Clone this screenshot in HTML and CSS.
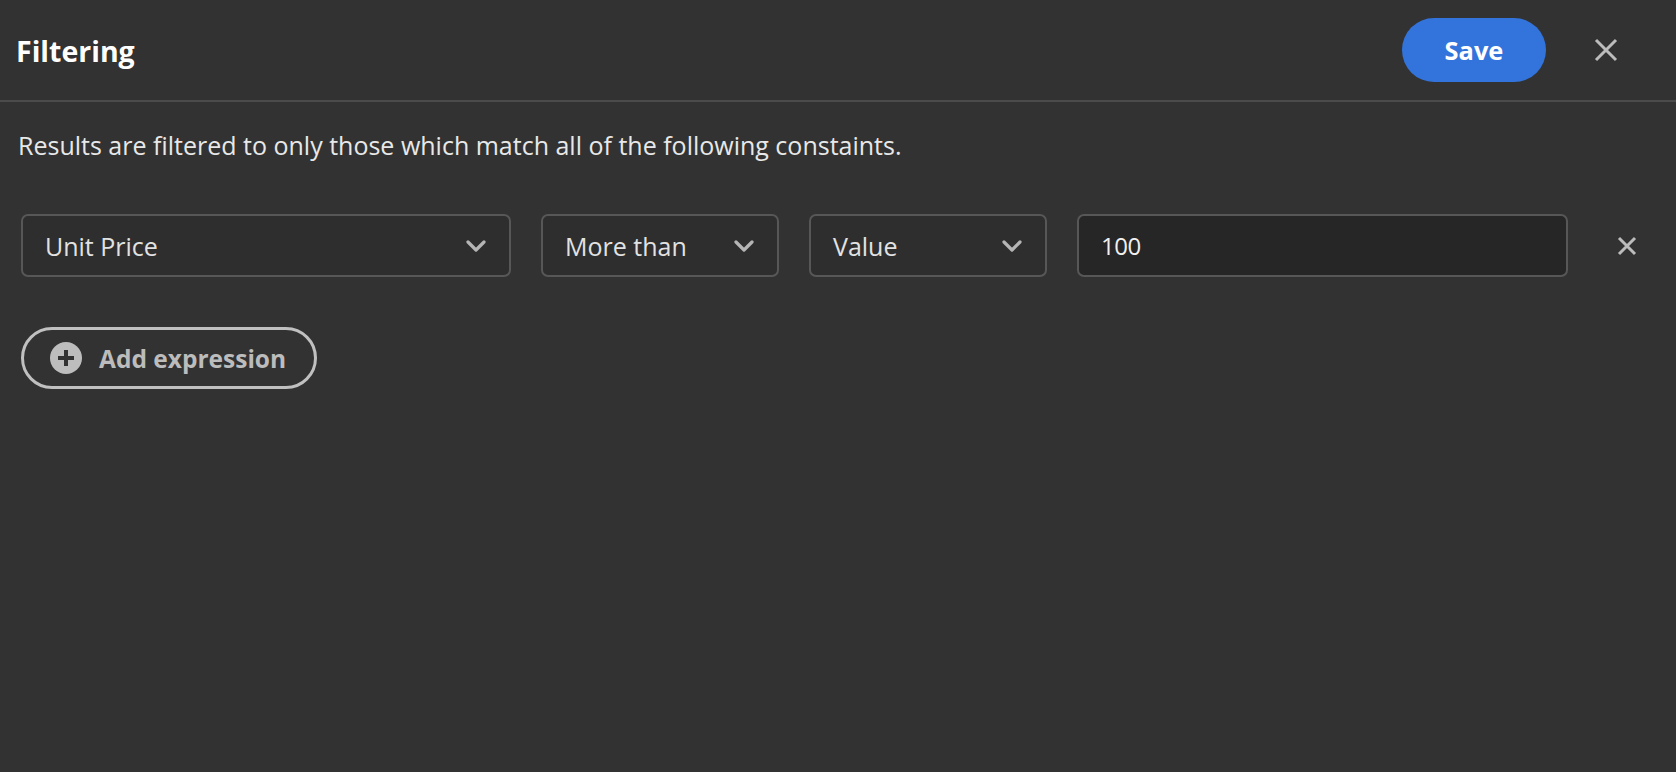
FILE: index.html
```html
<!DOCTYPE html>
<html lang="en">
<head>
<meta charset="utf-8">
<title>Filtering</title>
<link rel="stylesheet" href="styles.css">
</head>
<body>
<div class="dialog">
  <header class="header">
    <h1 class="title">Filtering</h1>
    <div class="header-actions">
      <button class="btn-save" type="button">Save</button>
      <button class="btn-close" type="button" aria-label="Close">
        <svg width="24" height="24" viewBox="0 0 24 24"><path d="M2 2 L22 22 M22 2 L2 22" stroke="#bcbcbc" stroke-width="3" fill="none"/></svg>
      </button>
    </div>
  </header>
  <main class="content">
    <p class="description">Results are filtered to only those which match all of the following constaints.</p>
    <div class="expr-row">
      <div class="select select-field">
        <span class="select-label">Unit Price</span>
        <svg class="chevron" width="20" height="12" viewBox="0 0 20 12"><path d="M2 2 L10 10 L18 2" stroke="#b5b5b5" stroke-width="3.2" fill="none" stroke-linecap="round" stroke-linejoin="round"/></svg>
      </div>
      <div class="select select-op">
        <span class="select-label">More than</span>
        <svg class="chevron" width="20" height="12" viewBox="0 0 20 12"><path d="M2 2 L10 10 L18 2" stroke="#b5b5b5" stroke-width="3.2" fill="none" stroke-linecap="round" stroke-linejoin="round"/></svg>
      </div>
      <div class="select select-type">
        <span class="select-label">Value</span>
        <svg class="chevron" width="20" height="12" viewBox="0 0 20 12"><path d="M2 2 L10 10 L18 2" stroke="#b5b5b5" stroke-width="3.2" fill="none" stroke-linecap="round" stroke-linejoin="round"/></svg>
      </div>
      <div class="value-input">100</div>
      <button class="btn-remove" type="button" aria-label="Remove">
        <svg width="20" height="20" viewBox="0 0 20 20"><path d="M2 2 L18 18 M18 2 L2 18" stroke="#bcbcbc" stroke-width="3" fill="none"/></svg>
      </button>
    </div>
    <button class="btn-add" type="button">
      <svg class="plus" width="32" height="32" viewBox="0 0 32 32"><circle cx="16" cy="16" r="16" fill="#bdbdbd"/><path d="M16 8 V24 M8 16 H24" stroke="#323232" stroke-width="4"/></svg>
      <span>Add expression</span>
    </button>
  </main>
</div>
</body>
</html>
```
FILE: styles.css
```css
* { box-sizing: border-box; }
html, body {
  margin: 0;
  padding: 0;
  background: #323232;
  height: 100%;
}
body {
  font-family: "Open Sans", "Noto Sans", sans-serif;
  color: #e6e6e6;
}
button {
  font-family: inherit;
  border: none;
  background: none;
  padding: 0;
  cursor: pointer;
}
.header {
  display: flex;
  align-items: center;
  justify-content: space-between;
  height: 102px;
  padding: 0 46px 0 16px;
  border-bottom: 2px solid #4b4b4b;
}
.title {
  margin: 2px 0 0 0;
  font-size: 28.5px;
  font-weight: 700;
  color: #ffffff;
}
.header-actions {
  display: flex;
  align-items: center;
  gap: 36px;
}
.btn-save {
  width: 144px;
  height: 64px;
  border-radius: 32px;
  background: #3274db;
  color: #ffffff;
  font-size: 25.4px;
  font-weight: 700;
}
.btn-close {
  width: 48px;
  height: 48px;
  display: flex;
  align-items: center;
  justify-content: center;
}
.content {
  padding: 26px 21px 0 21px;
}
.description {
  margin: 0 0 0 -3px;
  font-size: 25px;
  line-height: 34px;
  color: #e8e8e8;
}
.expr-row {
  display: flex;
  align-items: center;
  gap: 30px;
  margin-top: 52px;
}
.select {
  display: flex;
  align-items: center;
  justify-content: space-between;
  height: 63px;
  padding: 0 23px 0 22px;
  border: 2px solid #575757;
  border-radius: 7px;
  background: #2e2e2e;
  font-size: 25px;
  color: #e2e2e2;
}
.select-field { width: 490px; }
.select-op { width: 238px; }
.select-type { width: 238px; }
.value-input {
  width: 491px;
  height: 63px;
  display: flex;
  align-items: center;
  padding: 0 22px;
  border: 2px solid #575757;
  border-radius: 7px;
  background: #262626;
  font-size: 24px;
  letter-spacing: -0.5px;
  color: #f0f0f0;
}
.btn-remove {
  width: 40px;
  height: 40px;
  margin-left: 9px;
  display: flex;
  align-items: center;
  justify-content: center;
}
.btn-add {
  display: flex;
  align-items: center;
  gap: 17px;
  margin-top: 50px;
  height: 62px;
  width: 296px;
  padding: 0 0 0 26px;
  border: 3px solid #c0c0c0;
  border-radius: 31px;
  color: #bcbcbc;
  font-size: 24.5px;
  font-weight: 700;
}
.plus { flex: none; }
```
